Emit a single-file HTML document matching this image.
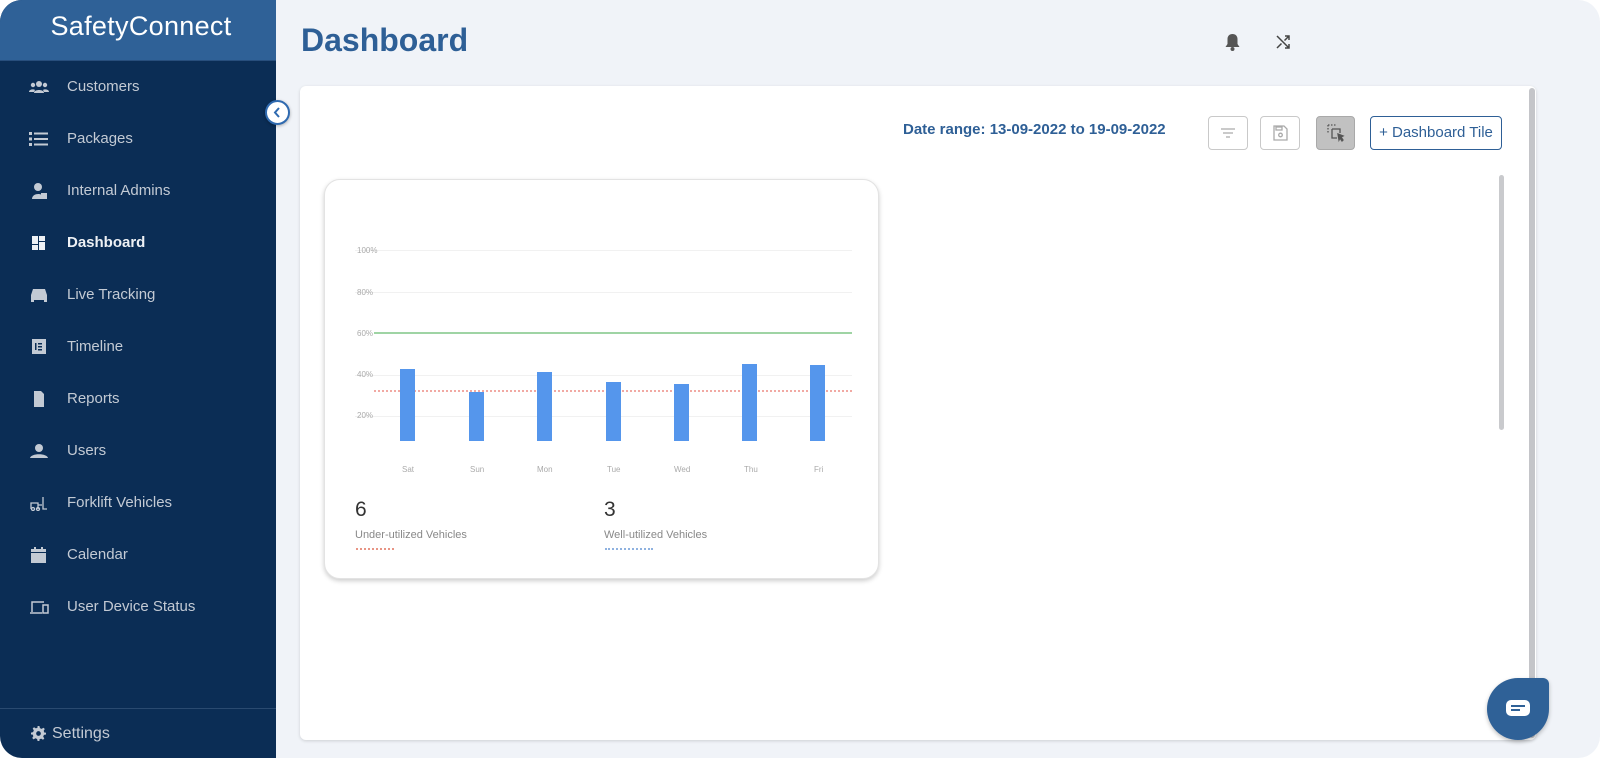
<!DOCTYPE html>
<html><head><meta charset="utf-8"><style>
*{margin:0;padding:0;box-sizing:border-box}
body{width:1600px;height:773px;background:#fff;font-family:"Liberation Sans",sans-serif;overflow:hidden;position:relative}
#app{position:absolute;left:0;top:0;width:1600px;height:758px;background:#f0f3f8;border-radius:22px;overflow:hidden}
#side{position:absolute;left:0;top:0;width:276px;height:758px;background:#0b2d55}
#logo{height:61px;background:#2f6197;color:#fff;font-size:27px;font-weight:300;letter-spacing:.3px;text-align:center;line-height:52px;padding-left:6px;border-bottom:1px solid #284e7c}
.it{position:absolute;left:0;width:276px;height:30px;color:#c3cad4;font-size:15px;line-height:30px}
.it span{position:absolute;left:67px}
.it svg{position:absolute;left:29px;top:7px}
.it.b{color:#eef1f5;font-weight:bold}
#set{position:absolute;left:0;top:708px;width:276px;border-top:1px solid #2a4a70;height:50px;color:#c3cad4;font-size:16px}
#toggle{position:absolute;left:265px;top:100px;width:25px;height:25px;border-radius:50%;background:#fff;border:2px solid #2f6ab0;box-shadow:0 1px 3px rgba(0,0,0,.3)}
h1{position:absolute;left:301px;top:22px;font-size:32px;color:#2e5f96;font-weight:bold}
#card{position:absolute;left:300px;top:86px;width:1236px;height:654px;background:#fff;border-radius:6px;box-shadow:0 1px 3px rgba(0,0,0,.15)}
.btn{position:absolute;top:116px;width:40px;height:34px;border:1px solid #c9c9c9;border-radius:4px;background:#fff}
#tile{position:absolute;left:1370px;top:116px;width:132px;height:34px;border:1px solid #2e5f96;border-radius:4px;color:#2e5f96;font-size:15px;line-height:32px;text-align:center}
#dr{position:absolute;left:903px;top:121px;font-size:15px;font-weight:bold;color:#2e5f96}
#chart{position:absolute;left:324px;top:179px;width:555px;height:400px;border:1px solid #e3e3e3;border-radius:16px;background:#fff;box-shadow:0 2px 5px rgba(0,0,0,.2)}
.gl{position:absolute;left:355px;width:497px;height:1px;background:#f1f1f1}
.yl{position:absolute;left:357px;font-size:8px;color:#aaa}
.bar{position:absolute;width:15px;background:#5596ec;bottom:317px}
.xl{position:absolute;top:465px;font-size:8px;color:#aaa}
</style></head><body><div id="app">
<div id="side">
<div id="logo">SafetyConnect</div>
<div class="it" style="top:72px"><svg width="20" height="16" viewBox="0 0 20 16" fill="#c3cad4"><circle cx="10" cy="5" r="3"/><circle cx="4" cy="6" r="2.2"/><circle cx="16" cy="6" r="2.2"/><path d="M5 14c0-4 10-4 10 0zM0 13c0-3 5-3 6-2l-1 2zM20 13c0-3-5-3-6-2l1 2z"/></svg><span>Customers</span></div>
<div class="it" style="top:124px"><svg width="20" height="16" viewBox="0 0 20 16" fill="#c3cad4"><rect x="0" y="1" width="3" height="3"/><rect x="5" y="1.5" width="14" height="2"/><rect x="0" y="6.5" width="3" height="3"/><rect x="5" y="7" width="14" height="2"/><rect x="0" y="12" width="3" height="3"/><rect x="5" y="12.5" width="14" height="2"/></svg><span>Packages</span></div>
<div class="it" style="top:176px"><svg width="20" height="16" viewBox="0 0 20 16" fill="#c3cad4"><circle cx="9" cy="4" r="4"/><path d="M3 16c0-6 10-6 10-3v3z"/><rect x="12" y="10" width="6" height="6"/></svg><span>Internal Admins</span></div>
<div class="it b" style="top:228px"><svg width="20" height="16" viewBox="0 0 20 16" fill="#eef1f5"><rect x="3" y="1" width="6" height="8"/><rect x="3" y="10" width="6" height="5"/><rect x="10" y="1" width="6" height="5"/><rect x="10" y="7" width="6" height="8"/></svg><span>Dashboard</span></div>
<div class="it" style="top:280px"><svg width="20" height="16" viewBox="0 0 20 16" fill="#c3cad4"><path d="M4 2h12l2 6v7h-3v-2H5v2H2V8z"/></svg><span>Live Tracking</span></div>
<div class="it" style="top:332px"><svg width="20" height="16" viewBox="0 0 20 16" fill="#c3cad4"><rect x="3" y="0" width="14" height="15"/><rect x="6" y="4" width="1.5" height="7" fill="#0b2d55"/><rect x="9" y="4" width="4" height="1.5" fill="#0b2d55"/><rect x="9" y="7" width="4" height="1.5" fill="#0b2d55"/><rect x="9" y="10" width="4" height="1.5" fill="#0b2d55"/></svg><span>Timeline</span></div>
<div class="it" style="top:384px"><svg width="20" height="16" viewBox="0 0 20 16" fill="#c3cad4"><path d="M5 0h7l3 3v13H5z"/></svg><span>Reports</span></div>
<div class="it" style="top:436px"><svg width="20" height="16" viewBox="0 0 20 16" fill="#c3cad4"><circle cx="10" cy="5" r="4"/><path d="M1 15c1-5 17-5 18 0z"/></svg><span>Users</span></div>
<div class="it" style="top:488px"><svg width="20" height="16" viewBox="0 0 20 16" fill="none" stroke="#c3cad4" stroke-width="1.3"><path d="M2 14V8h7v6M9 10h4M14 2v12h4"/><circle cx="4" cy="14" r="1.5"/><circle cx="9" cy="14" r="1.5"/></svg><span>Forklift Vehicles</span></div>
<div class="it" style="top:540px"><svg width="20" height="16" viewBox="0 0 20 16" fill="#c3cad4"><rect x="2" y="2" width="15" height="14"/><rect x="5" y="0" width="2" height="3"/><rect x="12" y="0" width="2" height="3"/><rect x="2" y="5" width="15" height="1" fill="#0b2d55"/></svg><span>Calendar</span></div>
<div class="it" style="top:592px"><svg width="20" height="16" viewBox="0 0 20 16" fill="none" stroke="#c3cad4" stroke-width="1.5"><path d="M3 13V3h12M1 14h12"/><rect x="14" y="6" width="5" height="8"/></svg><span>User Device Status</span></div>
<div id="set"><svg style="position:absolute;left:31px;top:17px" width="15" height="15" viewBox="0 0 16 16" fill="#c3cad4"><path d="M7 0h2l.5 2.2 1.8.8 2-1.2 1.4 1.4-1.2 2 .8 1.8L16 7v2l-2.2.5-.8 1.8 1.2 2-1.4 1.4-2-1.2-1.8.8L9 16H7l-.5-2.2-1.8-.8-2 1.2-1.4-1.4 1.2-2-.8-1.8L0 9V7l2.2-.5.8-1.8-1.2-2 1.4-1.4 2 1.2 1.8-.8z"/><circle cx="8" cy="8" r="2.5" fill="#0b2d55"/></svg><span style="position:absolute;left:52px;top:16px">Settings</span></div>
</div>
<div id="toggle"><svg width="21" height="21" viewBox="0 0 21 21"><path d="M12 6l-4 4.5 4 4.5" fill="none" stroke="#2f6ab0" stroke-width="2"/></svg></div>
<h1>Dashboard</h1>
<svg style="position:absolute;left:1224px;top:33px" width="17" height="19" viewBox="0 0 17 19" fill="#555"><path d="M8.5 1c3 0 5 2 5 5v5l2 3H1.5l2-3V6c0-3 2-5 5-5z"/><circle cx="8.5" cy="16" r="2"/></svg>
<svg style="position:absolute;left:1276px;top:35px" width="14" height="14" viewBox="0 0 14 14" fill="none" stroke="#444" stroke-width="1.5"><path d="M1 1l12 12M1 13l4.5-4.5M8.5 5.5L13 1M9 1h4v4M9 13h4V9"/></svg>
<div id="card"></div>
<div style="position:absolute;left:1529px;top:88px;width:6px;height:650px;background:#c4c5c9;border-radius:3px"></div>
<div style="position:absolute;left:1499px;top:175px;width:5px;height:255px;background:#c9cacd;border-radius:3px"></div>
<div id="dr">Date range: 13-09-2022 to 19-09-2022</div>
<div class="btn" style="left:1208px"><svg width="38" height="32" viewBox="0 0 38 32" stroke="#aaa" stroke-width="1.3"><path d="M12 12h14M14 16h10M17 20h4"/></svg></div>
<div class="btn" style="left:1260px"><svg width="38" height="32" viewBox="0 0 38 32" fill="none" stroke="#aaa" stroke-width="1.3"><path d="M13 9h10l3 3v11H13z"/><rect x="15" y="10" width="6" height="3"/><circle cx="19.5" cy="18" r="1.8"/></svg></div>
<div class="btn" style="left:1316px;width:39px;background:#c1c1c1;border-color:#a9a9a9"><svg width="38" height="32" viewBox="0 0 38 32" fill="none" stroke="#555" stroke-width="1.3"><path d="M11 8h8M11 8v8" stroke-dasharray="1.5 1.5"/><path d="M15 12h8v4M15 12v9h5"/><path d="M21 17l5 2-2 1 2 3-1 1-2-3-1 2z" fill="#555"/></svg></div>
<div id="tile">+ Dashboard Tile</div>
<div id="chart"></div>
<div class="gl" style="top:250px"></div><div class="gl" style="top:292px"></div><div class="gl" style="top:375px"></div><div class="gl" style="top:416px"></div>
<div class="yl" style="top:246px">100%</div><div class="yl" style="top:288px">80%</div><div class="yl" style="top:329px">60%</div><div class="yl" style="top:370px">40%</div><div class="yl" style="top:411px">20%</div>
<div style="position:absolute;left:374px;top:332px;width:478px;height:2px;background:#9fd4a4"></div>
<div style="position:absolute;left:374px;top:390px;width:478px;border-top:2px dotted #f1a9a3"></div>
<div class="bar" style="left:400px;height:72px"></div><div class="bar" style="left:469px;height:49px"></div><div class="bar" style="left:537px;height:69px"></div><div class="bar" style="left:606px;height:59px"></div><div class="bar" style="left:674px;height:57px"></div><div class="bar" style="left:742px;height:77px"></div><div class="bar" style="left:810px;height:76px"></div>
<div class="xl" style="left:402px">Sat</div><div class="xl" style="left:470px">Sun</div><div class="xl" style="left:537px">Mon</div><div class="xl" style="left:607px">Tue</div><div class="xl" style="left:674px">Wed</div><div class="xl" style="left:744px">Thu</div><div class="xl" style="left:814px">Fri</div>
<div style="position:absolute;left:355px;top:498px;font-size:21px;color:#333">6</div>
<div style="position:absolute;left:604px;top:498px;font-size:21px;color:#333">3</div>
<div style="position:absolute;left:355px;top:529px;font-size:11px;color:#888">Under-utilized Vehicles</div>
<div style="position:absolute;left:604px;top:529px;font-size:11px;color:#888">Well-utilized Vehicles</div>
<div style="position:absolute;left:356px;top:548px;width:38px;height:2px;border-top:2px dotted #e89585"></div>
<div style="position:absolute;left:605px;top:548px;width:48px;height:2px;border-top:2px dotted #8fb2e0"></div>
<div style="position:absolute;left:1487px;top:678px;width:62px;height:62px;background:#2f6197;border-radius:31px 6px 31px 31px;box-shadow:0 2px 4px rgba(0,0,0,.25)"><svg width="62" height="62" viewBox="0 0 62 62"><rect x="19" y="22" width="24" height="16" rx="5" fill="#fff"/><path d="M24 28h14M24 32h9" stroke="#2f6197" stroke-width="2"/></svg></div>
</div></body></html>
